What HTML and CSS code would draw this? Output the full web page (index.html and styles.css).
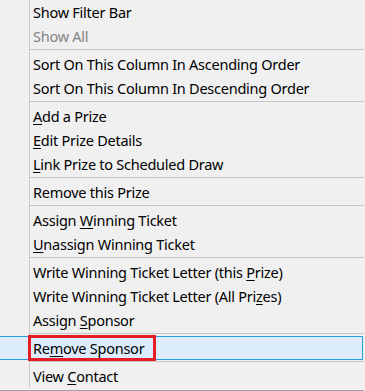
FILE: index.html
```html
<!DOCTYPE html>
<html>
<head>
<meta charset="utf-8">
<link rel="stylesheet" href="styles.css">
</head>
<body>
<div class="menu">
  <div class="list">
    <div class="item">Show Filter Bar</div>
    <div class="item disabled">Show All</div>
    <div class="sep"></div>
    <div class="item">Sort On This Column In Ascending Order</div>
    <div class="item">Sort On This Column In Descending Order</div>
    <div class="sep"></div>
    <div class="item"><u>A</u>dd a Prize</div>
    <div class="item"><u>E</u>dit Prize Details</div>
    <div class="item"><u>L</u>ink Prize to Scheduled Draw</div>
    <div class="sep"></div>
    <div class="item">Remove this Prize</div>
    <div class="sep"></div>
    <div class="item">Assign <u>W</u>inning Ticket</div>
    <div class="item"><u>U</u>nassign Winning Ticket</div>
    <div class="sep"></div>
    <div class="item">Write Winning Ticket Letter (this <u>P</u>rize)</div>
    <div class="item">Write Winning Ticket Letter (All Pri<u>z</u>es)</div>
    <div class="item">Assign <u>S</u>ponsor</div>
    <div class="sep"></div>
    <div class="item active">Re<u>m</u>ove Sponsor<span class="callout"></span></div>
    <div class="sep"></div>
    <div class="item">View <u>C</u>ontact</div>
  </div>
</div>
</body>
</html>
```

FILE: styles.css
```css
html, body {
  margin: 0;
  padding: 0;
  background: #f0f0f0;
  overflow: hidden;
}

body {
  width: 365px;
  height: 391px;
}

.menu {
  width: 364px;
  padding-bottom: 2px;
  border-bottom: 1px solid #a0a0a0;
  font-family: "Noto Sans", "Open Sans", sans-serif;
  font-size: 14.5px;
  letter-spacing: -0.25px;
  color: #000;
}

.list {
  display: flex;
  flex-direction: column;
  background: linear-gradient(to right, #f0f0f0 0, #f0f0f0 29px, #c8c8c8 29px, #c8c8c8 30px, #f0f0f0 30px);
}

.item {
  position: relative;
  height: 24px;
  line-height: 24px;
  padding-left: 33px;
  white-space: nowrap;
  margin-right: 1px;
  box-sizing: border-box;
}

.item u {
  text-decoration-thickness: 1px;
  text-underline-offset: 2px;
}

.disabled {
  color: #848484;
}

.active {
  background: #dcecfc;
  border: 1px solid #26a0da;
  border-left: none;
  padding-left: 33px;
  line-height: 22px;
}

.sep {
  height: 1px;
  margin: 1px 0 2px 30px;
  background: #c5c5c5;
}

.callout {
  position: absolute;
  left: 28px;
  top: -2px;
  width: 128px;
  height: 26px;
  border: 3px solid #e81c24;
  box-sizing: border-box;
}
```
